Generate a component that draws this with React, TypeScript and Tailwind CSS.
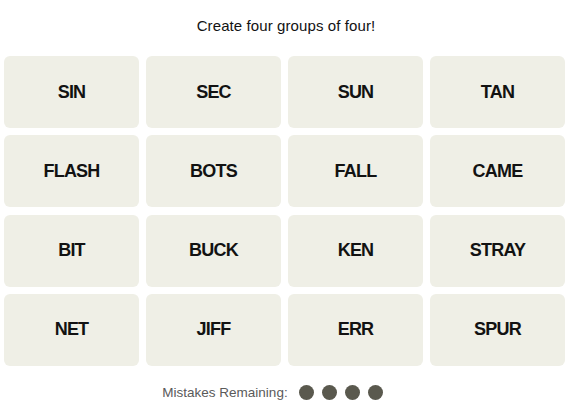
import React from "react";

const words = [
  "SIN", "SEC", "SUN", "TAN",
  "FLASH", "BOTS", "FALL", "CAME",
  "BIT", "BUCK", "KEN", "STRAY",
  "NET", "JIFF", "ERR", "SPUR",
];

export default function App() {
  return (
    <div
      className="w-[570px] h-[405px] bg-white flex flex-col"
      style={{ fontFamily: '"Liberation Sans", Arial, sans-serif' }}
    >
      <div className="h-[56px] flex items-center justify-center pb-[6px] pl-[2px]">
        <p className="text-[15px] text-[#121212] leading-none tracking-[0.1px]">Create four groups of four!</p>
      </div>
      <div className="ml-[4px] w-[561px] grid grid-cols-4 gap-x-[7px] gap-y-[7.33px]">
        {words.map((w) => (
          <div
            key={w}
            className="h-[72px] rounded-[6px] bg-[#efefe6] flex items-center justify-center text-[18px] font-bold text-[#121212] tracking-[-0.8px]"
          >
            {w}
          </div>
        ))}
      </div>
      <div className="flex-1 flex items-center justify-center gap-[11px] pr-[25px] pt-[14px]">
        <span className="text-[13.5px] text-[#5a5a5a] leading-none">Mistakes Remaining:</span>
        <div className="flex gap-[8px]">
          <span className="w-[15px] h-[15px] rounded-full bg-[#5a594e]" />
          <span className="w-[15px] h-[15px] rounded-full bg-[#5a594e]" />
          <span className="w-[15px] h-[15px] rounded-full bg-[#5a594e]" />
          <span className="w-[15px] h-[15px] rounded-full bg-[#5a594e]" />
        </div>
      </div>
    </div>
  );
}
